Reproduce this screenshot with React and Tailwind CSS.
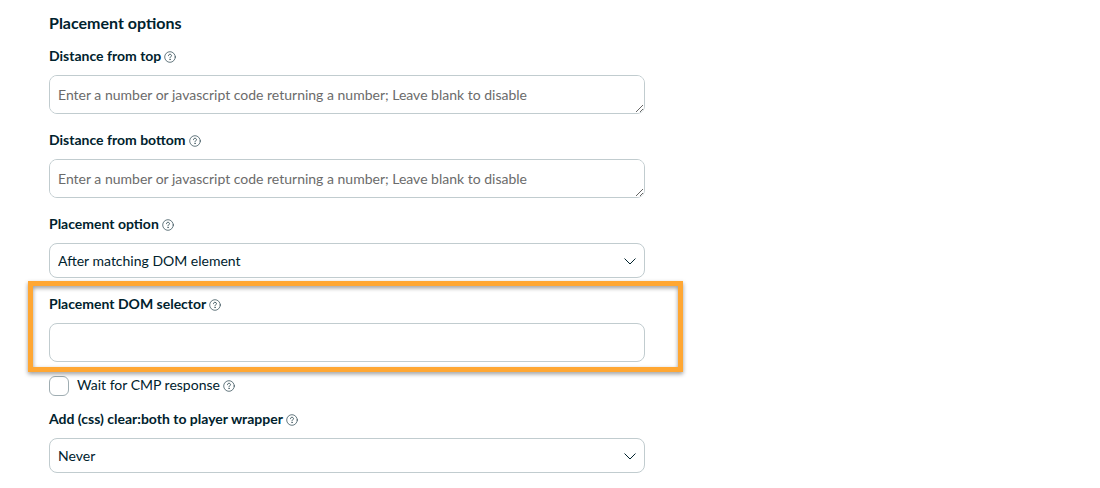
import React, { useState } from "react";

const CONTROL =
  "block w-full rounded-lg border border-[#c1cccf] bg-white px-2 text-sm text-[#00222d] placeholder-[#6b6b6b] outline-none focus:border-[#00222d]";

const DISTANCE_HINT =
  "Enter a number or javascript code returning a number; Leave blank to disable";

export default function App() {
  const [waitForCmp, setWaitForCmp] = useState(false);

  return (
    <main className="bg-white pt-[11px] pr-4 pb-4 pl-[49px] font-['Lato',sans-serif] text-[#00222d]">
      <form className="w-full max-w-[596px]">
        <h2 className="mb-[11px] text-base font-bold">Placement options</h2>

        <div className="flex flex-col gap-4">
          <Field id="distance-top" label="Distance from top">
            <textarea
              id="distance-top"
              rows="1"
              placeholder={DISTANCE_HINT}
              className={`${CONTROL} h-[39px] resize py-[9px]`}
            />
          </Field>

          <Field id="distance-bottom" label="Distance from bottom">
            <textarea
              id="distance-bottom"
              rows="1"
              placeholder={DISTANCE_HINT}
              className={`${CONTROL} h-[39px] resize py-[9px]`}
            />
          </Field>

          <Field id="placement-option" label="Placement option">
            <Select
              id="placement-option"
              options={[
                "After matching DOM element",
                "Before matching DOM element",
                "Inside matching DOM element",
              ]}
            />
          </Field>

          <Field id="dom-selector" label="Placement DOM selector" highlighted>
            <input
              id="dom-selector"
              type="text"
              className={`${CONTROL} h-[39px]`}
            />
          </Field>
        </div>

        <div className="mt-[14px] mb-[13px] flex items-start gap-2">
          <input
            id="wait-cmp"
            type="checkbox"
            checked={waitForCmp}
            onChange={(e) => setWaitForCmp(e.target.checked)}
            className="size-5 appearance-none rounded-md border border-[#9fadb2] bg-white checked:bg-[#00222d]"
          />
          <div className="flex items-center gap-[3px]">
            <label htmlFor="wait-cmp" className="text-sm/[18px]">
              Wait for CMP response
            </label>
            <HelpIcon />
          </div>
        </div>

        <Field id="clear-both" label="Add (css) clear:both to player wrapper">
          <Select id="clear-both" options={["Never", "Always"]} />
        </Field>
      </form>
    </main>
  );
}

function Field({ id, label, highlighted, children }) {
  return (
    <div className="relative">
      <div className="mb-[9px] flex items-center gap-[3px]">
        <label htmlFor={id} className="text-sm font-bold">
          {label}
        </label>
        <HelpIcon />
      </div>
      {children}
      {highlighted && (
        <div className="pointer-events-none absolute -top-[13px] -right-[38px] -bottom-[10px] -left-[21px] border-[5px] border-[#ffa733] drop-shadow-[0_2px_2px_rgba(0,0,0,0.4)]" />
      )}
    </div>
  );
}

function Select({ id, options }) {
  return (
    <div className="relative">
      <select id={id} className={`${CONTROL} h-[35px] appearance-none pr-8`}>
        {options.map((option) => (
          <option key={option}>{option}</option>
        ))}
      </select>
      <svg
        viewBox="0 0 12 8"
        className="pointer-events-none absolute top-[15px] right-[9px] h-2 w-3"
        fill="none"
        stroke="#00222d"
        strokeWidth="1"
        strokeLinecap="round"
        strokeLinejoin="round"
      >
        <path d="M0.8 0.8 6 6 11.2 0.8" />
      </svg>
    </div>
  );
}

function HelpIcon() {
  return (
    <svg
      viewBox="0 0 12 12"
      className="mt-[2px] size-3"
      fill="none"
      stroke="#00222d"
      strokeLinecap="round"
      strokeLinejoin="round"
    >
      <circle cx="6" cy="6" r="5.3" strokeWidth="0.6" />
      <path
        d="M4.5 4.7C4.5 3.8 5.1 3.3 6 3.3S7.5 3.9 7.5 4.6C7.5 5.6 6 5.7 6 6.9"
        strokeWidth="0.7"
      />
      <circle cx="6" cy="8.5" r="0.3" strokeWidth="0.4" fill="#00222d" />
    </svg>
  );
}
